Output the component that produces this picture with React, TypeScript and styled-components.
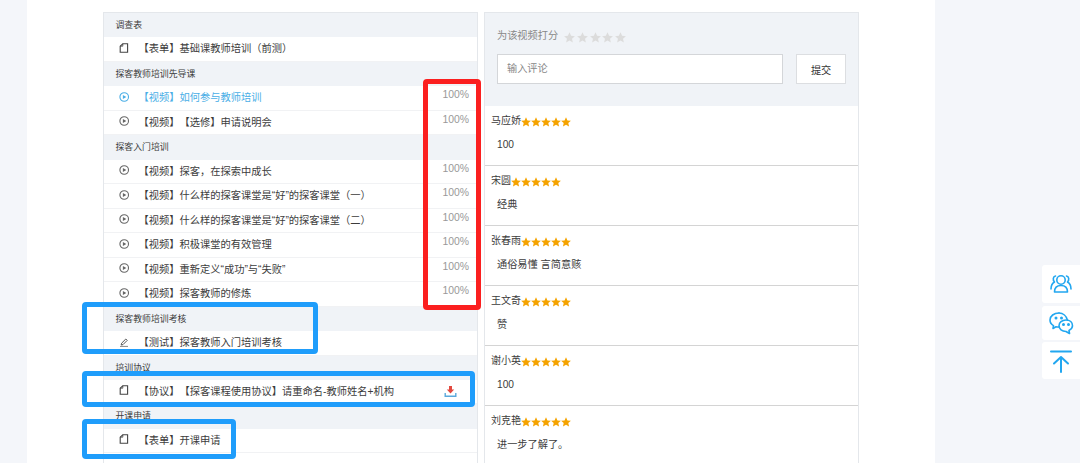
import styled, { createGlobalStyle } from "styled-components";

const Global = createGlobalStyle`
    html, body {
        margin: 0;
        height: 463px;
        overflow: hidden;
        background: #f4f6fa;
        font-family: "Liberation Sans", "Noto Sans CJK SC", sans-serif;
        text-spacing-trim: space-all;
    }
`

const Page = styled.div`
    position: relative;
    box-sizing: border-box;
    width: 908px;
    height: 463px;
    margin-left: 27px;
    padding: 12px 76px 0;
    background: #fff;
    display: flex;
    gap: 6px;
    overflow: hidden;
`

const Catalog = styled.div`
    box-sizing: border-box;
    width: 375px;
    flex: none;
    border: 1px solid #e4e7eb;
    border-bottom: none;
    display: flex;
    flex-direction: column;
`

const SectionTitle = styled.div`
    height: 24.4px;
    flex: none;
    padding-left: 11.5px;
    background: #f0f3f7;
    font-size: 8.9px;
    line-height: 24.4px;
    color: #3c3c3c;
`

const Row = styled.div<{ $active?: boolean }>`
    box-sizing: border-box;
    height: 24.5px;
    flex: none;
    display: flex;
    align-items: center;
    padding: 0 8px 2.5px 14.5px;
    border-bottom: 1px solid #f1f2f4;
    font-size: 10.25px;
    color: ${p => p.$active ? "#4aaee6" : "#3c3c3c"};
`

const RowIcon = styled.svg`
    width: 12px;
    height: 12px;
    flex: none;
    margin-right: 8px;
`

const RowText = styled.span`
    flex: 1;
    white-space: nowrap;
`

const Percent = styled.span`
    color: #999;
    font-size: 10.4px;
    margin-bottom: 4px;
`

const DownloadIcon = styled.svg`
    width: 13px;
    height: 13px;
    margin: 3px 12px 0 0;
`

const Side = styled.div`
    box-sizing: border-box;
    width: 375px;
    flex: none;
    border-left: 1px solid #e4e7eb;
    border-right: 1px solid #e4e7eb;
    display: flex;
    flex-direction: column;
`

const RateBox = styled.div`
    box-sizing: border-box;
    height: 94px;
    flex: none;
    padding: 16px 12px 0 12px;
    background: #f0f3f7;
    border-top: 1px solid #e4e7eb;
`

const RateLine = styled.div`
    display: flex;
    align-items: center;
    gap: 6px;
    font-size: 10.2px;
    line-height: 14px;
    color: #888;
`

const Stars = styled.span<{ $gap: number, $drop: number }>`
    display: inline-flex;
    gap: ${p => p.$gap}px;
    align-items: center;
    margin-top: ${p => p.$drop}px;
`

const CommentForm = styled.div`
    display: flex;
    gap: 13px;
    margin-top: 11px;
`

const CommentInput = styled.div`
    box-sizing: border-box;
    width: 287px;
    height: 30px;
    padding-left: 9px;
    background: #fff;
    border: 1px solid #d4d6d9;
    font-size: 10.2px;
    line-height: 28px;
    color: #888;
`

const SubmitButton = styled.button`
    box-sizing: border-box;
    width: 50px;
    height: 30px;
    padding: 0;
    background: #fff;
    border: 1px solid #dcdee1;
    font-family: inherit;
    font-size: 10.2px;
    color: #333;
`

const Comment = styled.div`
    box-sizing: border-box;
    height: 60.1px;
    flex: none;
    padding: 8px 0 0 6px;
    border-bottom: 1px solid #d4d4d4;
`

const CommentHead = styled.div`
    display: flex;
    align-items: center;
    font-size: 10px;
    line-height: 14px;
    color: #3c3c3c;
`

const CommentBody = styled.div`
    margin-top: 9.6px;
    padding-left: 6px;
    font-size: 10.2px;
    line-height: 14px;
    color: #3c3c3c;
`

const Mark = styled.div<{ $color: string }>`
    position: absolute;
    box-sizing: border-box;
    border: 5px solid ${p => p.$color};
    border-radius: 4px;
`

const RedMark = styled(Mark)`
    left: 396px;
    top: 79px;
    width: 58px;
    height: 231px;
`

const BlueMarkTest = styled(Mark)`
    left: 55px;
    top: 302px;
    width: 236px;
    height: 52px;
`

const BlueMarkAgreement = styled(Mark)`
    left: 55px;
    top: 371px;
    width: 393px;
    height: 36px;
`

const BlueMarkForm = styled(Mark)`
    left: 55px;
    top: 419px;
    width: 154px;
    height: 40px;
`

const ToolRail = styled.div`
    position: fixed;
    right: 0;
    top: 265px;
    width: 38px;
    display: flex;
    flex-direction: column;
    gap: 2.5px;
`

const Tool = styled.div<{ $h: number }>`
    height: ${p => p.$h}px;
    background: #fff;
    border-radius: 3px 0 0 3px;
    display: flex;
    align-items: center;
    justify-content: center;
`

const ToolIcon = styled.svg`
    width: 26px;
    height: 26px;
    fill: none;
    stroke: #22a7f0;
    stroke-width: 1.6;
    stroke-linecap: round;
    stroke-linejoin: round;
`

const FormIcon = () => (
    <RowIcon viewBox="0 0 12 12" fill="none" stroke="#444" strokeWidth="1.1">
        <path d="M3.8 1.8 H8.6 V10.2 H1.2 V4.2 Z" />
        <path d="M3.8 1.8 V4.2 H1.2" strokeWidth=".8" />
    </RowIcon>
)

const PlayIcon = ({ color = "#666" }: { color?: string }) => (
    <RowIcon viewBox="0 0 12 12" fill="none" stroke={color} strokeWidth="1.1">
        <circle cx="5.2" cy="6" r="4.3" />
        <path d="M3.9 3.9 L7.3 6 L3.9 8.1 Z" fill={color} stroke="none" />
    </RowIcon>
)

const PenIcon = () => (
    <RowIcon viewBox="0 0 12 12" fill="none" stroke="#555" strokeWidth="1">
        <path d="M2.6 7.2 L6.8 3 L8.2 4.4 L4 8.6 L2.2 9 Z" />
        <path d="M1 10.4 H9" strokeWidth=".7" />
    </RowIcon>
)

const Star = ({ color, size }: { color: string, size: number }) => (
    <svg width={size} height={size} viewBox="0 0 20 20">
        <path d="M10 .4 L12.9 6.8 L19.8 7.5 L14.6 12.2 L16.1 19.2 L10 15.6 L3.9 19.2 L5.4 12.2 L.2 7.5 L7.1 6.8 Z" fill={color} />
    </svg>
)

const StarRow = ({ color, size, gap, drop }: { color: string, size: number, gap: number, drop: number }) => (
    <Stars $gap={gap} $drop={drop}>
        {[0, 1, 2, 3, 4].map(i => <Star key={i} color={color} size={size} />)}
    </Stars>
)

type Item = { icon: "form" | "play" | "pen", text: string, percent?: boolean, active?: boolean, download?: boolean }

const sections: { title: string, items: Item[] }[] = [
    { title: "调查表", items: [{ icon: "form", text: "【表单】基础课教师培训（前测）" }] },
    {
        title: "探客教师培训先导课",
        items: [
            { icon: "play", text: "【视频】如何参与教师培训", percent: true, active: true },
            { icon: "play", text: "【视频】【选修】申请说明会", percent: true },
        ],
    },
    {
        title: "探客入门培训",
        items: [
            { icon: "play", text: "【视频】探客，在探索中成长", percent: true },
            { icon: "play", text: "【视频】什么样的探客课堂是“好”的探客课堂（一）", percent: true },
            { icon: "play", text: "【视频】什么样的探客课堂是“好”的探客课堂（二）", percent: true },
            { icon: "play", text: "【视频】积极课堂的有效管理", percent: true },
            { icon: "play", text: "【视频】重新定义“成功”与“失败”", percent: true },
            { icon: "play", text: "【视频】探客教师的修炼", percent: true },
        ],
    },
    { title: "探客教师培训考核", items: [{ icon: "pen", text: "【测试】探客教师入门培训考核" }] },
    { title: "培训协议", items: [{ icon: "form", text: "【协议】【探客课程使用协议】请重命名-教师姓名+机构", download: true }] },
    { title: "开课申请", items: [{ icon: "form", text: "【表单】开课申请" }] },
]

const comments = [
    { name: "马应娇", body: "100" },
    { name: "宋圆", body: "经典" },
    { name: "张春雨", body: "通俗易懂 言简意赅" },
    { name: "王文奇", body: "赞" },
    { name: "谢小英", body: "100" },
    { name: "刘克艳", body: "进一步了解了。" },
]

const ItemIcon = ({ item }: { item: Item }) => {
    if (item.icon === "form") return <FormIcon />
    if (item.icon === "pen") return <PenIcon />
    return <PlayIcon color={item.active ? "#4aaee6" : "#666"} />
}

export default function App() {
    return (
        <>
            <Global />
            <Page>
                <Catalog>
                    {sections.map(section => (
                        <div key={section.title}>
                            <SectionTitle>{section.title}</SectionTitle>
                            {section.items.map(item => (
                                <Row key={item.text} $active={item.active}>
                                    <ItemIcon item={item} />
                                    <RowText>{item.text}</RowText>
                                    {item.percent && <Percent>100%</Percent>}
                                    {item.download && (
                                        <DownloadIcon viewBox="0 0 13 13" fill="none">
                                            <path d="M5 1 H8 V4.6 H10.2 L6.5 8.4 L2.8 4.6 H5 Z" fill="#e2483f" />
                                            <path d="M1.2 8 V11.2 H11.8 V8" stroke="#5aa9dc" strokeWidth="1.4" />
                                        </DownloadIcon>
                                    )}
                                </Row>
                            ))}
                        </div>
                    ))}
                    <Row />
                </Catalog>
                <Side>
                    <RateBox>
                        <RateLine>
                            为该视频打分
                            <StarRow color="#dcdcdc" size={11} gap={1.7} drop={2} />
                        </RateLine>
                        <CommentForm>
                            <CommentInput>输入评论</CommentInput>
                            <SubmitButton>提交</SubmitButton>
                        </CommentForm>
                    </RateBox>
                    {comments.map(comment => (
                        <Comment key={comment.name}>
                            <CommentHead>
                                {comment.name}
                                <StarRow color="#f5a300" size={10} gap={0} drop={1} />
                            </CommentHead>
                            <CommentBody>{comment.body}</CommentBody>
                        </Comment>
                    ))}
                </Side>
                <RedMark $color="#fb1f1f" />
                <BlueMarkTest $color="#1f9dfb" />
                <BlueMarkAgreement $color="#1f9dfb" />
                <BlueMarkForm $color="#1f9dfb" />
            </Page>
            <ToolRail>
                <Tool $h={38}>
                    <ToolIcon viewBox="0 0 26 26">
                        <circle cx="13" cy="9" r="4.2" />
                        <path d="M6.5 21 C6.5 16.5 9 14.5 13 14.5 C17 14.5 19.5 16.5 19.5 21 Z" />
                        <path d="M7.5 5 C5 5.5 4.5 9 6.5 11 C4 12.5 3 15 3 18" />
                        <path d="M18.5 5 C21 5.5 21.5 9 19.5 11 C22 12.5 23 15 23 18" />
                    </ToolIcon>
                </Tool>
                <Tool $h={34}>
                    <ToolIcon viewBox="0 0 26 26">
                        <path d="M11 3 C6 3 2 6 2 10 C2 12.5 3.5 14.5 5.5 15.6 L5 18.5 L8 16.8 C9 17 10 17.1 11 17" />
                        <path d="M19.5 10.2 C18.5 6 15 3 11 3" />
                        <path d="M18 10 C14 10 11 12.6 11 15.8 C11 19 14 21.5 18 21.5 L21.5 23.5 L21 20.4 C23 19.4 24.5 17.8 24.5 15.8 C24.5 12.6 22 10 18 10 Z" />
                        <circle cx="8" cy="8" r=".7" />
                        <circle cx="13.5" cy="8" r=".7" />
                        <circle cx="15.5" cy="14.5" r=".7" />
                        <circle cx="20.5" cy="14.5" r=".7" />
                    </ToolIcon>
                </Tool>
                <Tool $h={37}>
                    <ToolIcon viewBox="0 0 26 26">
                        <path d="M3 3.5 H23" strokeWidth="2" />
                        <path d="M13 24 V9 M6 15.5 L13 9 L20 15.5" strokeWidth="2" />
                    </ToolIcon>
                </Tool>
            </ToolRail>
        </>
    )
}
